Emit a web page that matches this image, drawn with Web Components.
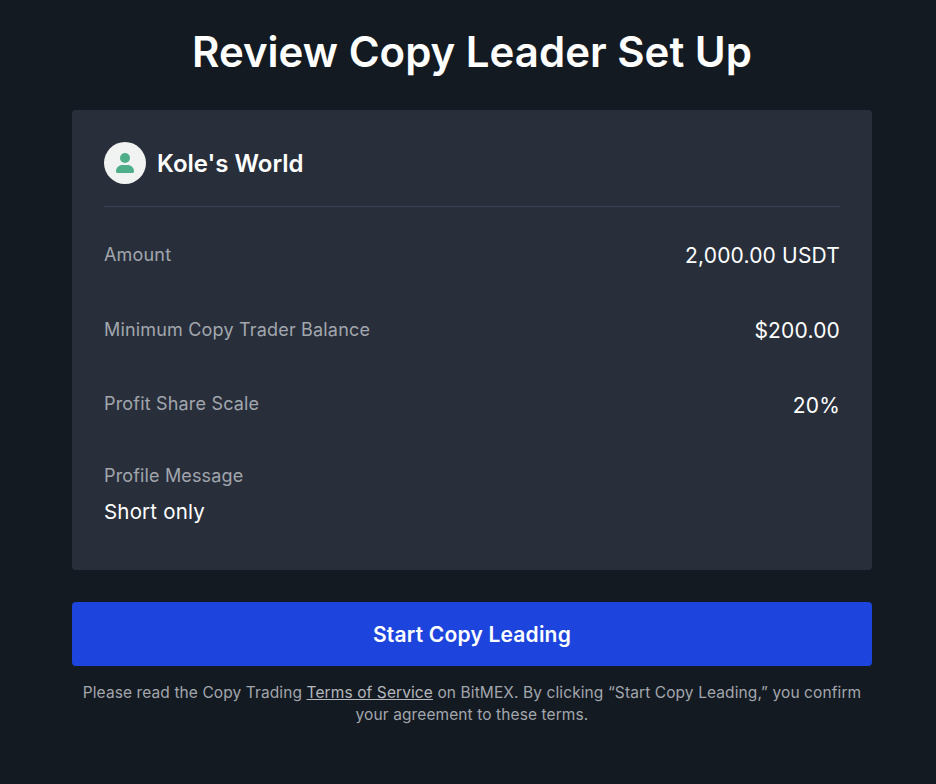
<!DOCTYPE html>
<html>
<head>
<meta charset="utf-8">
<style>
html, body { margin: 0; background: #141a21; }
body { font-family: Inter, "Liberation Sans", sans-serif; color: #fff; }
</style>
</head>
<body>
<review-page>
  <leader-card name="Kole's World">
    <detail-row label="Amount" value="2,000.00 USDT"></detail-row>
    <detail-row label="Minimum Copy Trader Balance" value="$200.00"></detail-row>
    <detail-row class="nudge" label="Profit Share Scale" value="20%"></detail-row>
    <message-block label="Profile Message" value="Short only"></message-block>
  </leader-card>
</review-page>
<script>
class ReviewPage extends HTMLElement {
  constructor() {
    super();
    this.attachShadow({ mode: "open" }).innerHTML = `
    <style>
    :host { display: block; width: 936px; height: 784px; box-sizing: border-box; padding: 25px 64px 0 72px; }
    h1 { margin: 0 0 31px; font-size: 42px; line-height: 54px; font-weight: 600; text-align: center; }
    button {
      display: block; width: 100%; height: 64px; margin-top: 32px; padding: 2px 0 0; border: 0; border-radius: 4px;
      background: #1d45dd; color: #fff; font: 600 21px/28px Inter, sans-serif; letter-spacing: 0.2px;
    }
    p {
      margin: 16px 0 0; font-size: 15.5px; letter-spacing: 0.1px; line-height: 22px; text-align: center; color: #a2a6ad;
    }
    a { color: #b4b7bc; text-decoration: underline; }
    </style>
    <h1>Review Copy Leader Set Up</h1>
    <slot></slot>
    <button>Start Copy Leading</button>
    <p>Please read the Copy Trading <a>Terms of Service</a> on BitMEX. By clicking “Start Copy Leading,” you confirm your agreement to these terms.</p>`;
  }
}
customElements.define("review-page", ReviewPage);

class LeaderCard extends HTMLElement {
  constructor() {
    super();
    this.attachShadow({ mode: "open" }).innerHTML = `
    <style>
    :host { display: block; box-sizing: border-box; height: 460px; padding: 32px; background: #282f3b; border-radius: 4px; }
    header { display: flex; align-items: center; gap: 11px; height: 42px; padding-bottom: 22px; border-bottom: 1px solid #374151; margin-bottom: 21px; }
    .avatar { width: 42px; height: 42px; border-radius: 50%; background: #f1f3f3; display: flex; align-items: center; justify-content: center; }
    .name { font-size: 24px; line-height: 32px; font-weight: 600; padding-top: 2px; }
    </style>
    <header>
      <span class="avatar">
        <svg width="20" height="22" viewBox="0 0 20 22"><circle cx="10" cy="6" r="5" fill="#4fae8a"/><path d="M1 19.5C1 15.500 4 13 7.500 13h5c3.500 0 6.500 2.500 6.500 6.500 0 .8-.5 1.500-1.500 1.500h-15C1.500 21 1 20.300 1 19.500z" fill="#4fae8a"/></svg>
      </span>
      <span class="name"></span>
    </header>
    <slot></slot>`;
    this.shadowRoot.querySelector(".name").textContent = this.getAttribute("name");
  }
}
customElements.define("leader-card", LeaderCard);

class DetailRow extends HTMLElement {
  constructor() {
    super();
    this.attachShadow({ mode: "open" }).innerHTML = `
    <style>
    :host { display: flex; justify-content: space-between; align-items: center; height: 54px; margin-bottom: 21px; }
    .label { font-size: 18px; letter-spacing: 0.18px; color: #a2a6ad; margin-bottom: 2px; }
    :host(.nudge) .label { margin-bottom: 4px; }
    .value { font-size: 21px; letter-spacing: 0.18px; color: #fff; }
    </style>
    <span class="label"></span><span class="value"></span>`;
    this.shadowRoot.querySelector(".label").textContent = this.getAttribute("label");
    this.shadowRoot.querySelector(".value").textContent = this.getAttribute("value");
  }
}
customElements.define("detail-row", DetailRow);

class MessageBlock extends HTMLElement {
  constructor() {
    super();
    this.attachShadow({ mode: "open" }).innerHTML = `
    <style>
    :host { display: block; padding-top: 9px; }
    .label { font-size: 18px; letter-spacing: 0.15px; line-height: 28px; color: #a2a6ad; }
    .value { font-size: 20.5px; letter-spacing: 0.18px; line-height: 28px; margin-top: 8px; color: #fff; }
    </style>
    <div class="label"></div><div class="value"></div>`;
    this.shadowRoot.querySelector(".label").textContent = this.getAttribute("label");
    this.shadowRoot.querySelector(".value").textContent = this.getAttribute("value");
  }
}
customElements.define("message-block", MessageBlock);
</script>
</body>
</html>
